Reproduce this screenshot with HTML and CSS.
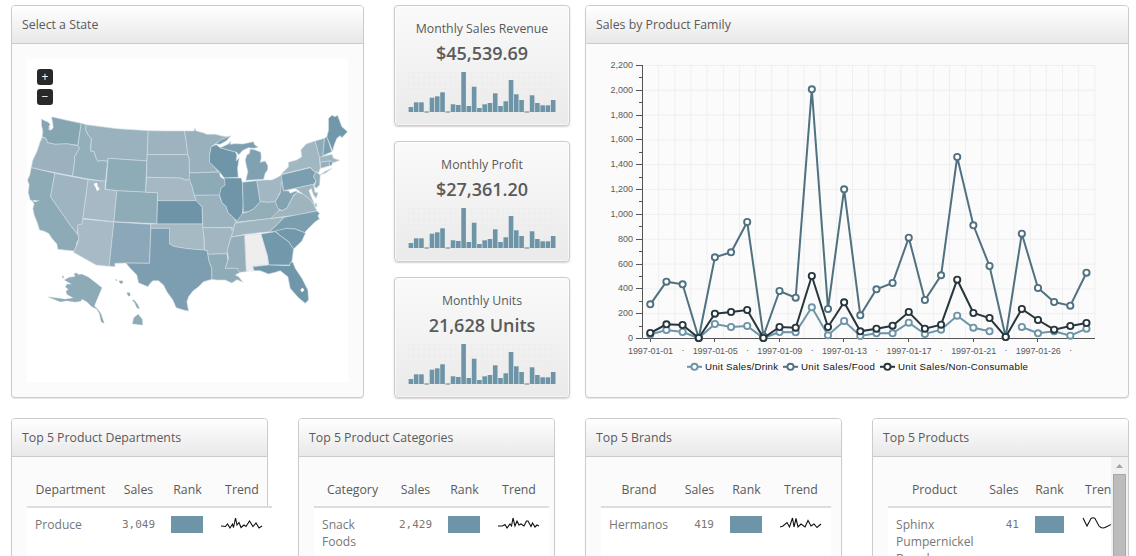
FILE: index.html
```html
<!DOCTYPE html>
<html lang="en">
<head>
<meta charset="utf-8">
<title>Sales Dashboard</title>
<link rel="stylesheet" href="styles.css">
</head>
<body>
<main class="dashboard">
  <div class="row top">
    <section class="panel map-panel">
      <h2 class="panel-head">Select a State</h2>
      <div class="map-body">
        <div class="map">
          <div class="zoom-btns"><span class="zoom-btn">+</span><span class="zoom-btn">−</span></div>
          <svg class="map-svg" viewBox="27 59 321 323" width="321" height="323">
            <g transform="translate(20.2 105) scale(.33333)" class="states">
              <path fill="#85a5b3" d="M64 42L75 48 85 52 90 60 85 66 90 70 84 72 92 76 99 68 97 50 94 38 97 36 140 46 183 55 173 121 140 117 105 118 82 113 77 100 66 95 68 80 64 60Z"/>
              <path fill="#9bb2be" d="M66 97L77 100 82 113 105 118 140 116 173 122 178 130 163 155 164 165 157 213 95 201 33 188 38 165 50 140 60 110Z"/>
              <path fill="#8daab7" d="M33 188L104 205 91 275 150 360 174 390 176 402 170 412 168 425 162 438 113 433 110 417 95 400 85 385 68 377 58 375 52 355 42 330 38 310 42 298 36 287 30 285 24 262 27 240 22 225 29 210Z"/>
              <path fill="#9eb4c0" d="M104 205L204 224 188 340 185 358 175 358 172 375 172 388 150 360 91 275Z"/>
              <path fill="#93afbb" d="M183 55L198 59 196 73 204 90 214 102 212 120 211 138 222 140 226 155 233 169 246 166 262 169 256 229 204 222 157 213 164 165 163 155 178 130 173 122Z"/>
              <path fill="#9ab2be" d="M198 59L290 71 384 77 380 168 264 160 262 169 246 166 233 169 226 155 222 140 211 138 214 102 204 90 196 73Z"/>
              <path fill="#8eabb8" d="M264 160L380 168 376 262 290 257 256 253Z"/>
              <path fill="#a6b9c4" d="M204 224L256 229 254 253 290 257 281 350 188 340Z"/>
              <path fill="#8eabb8" d="M290 257L412 263 410 356 281 350Z"/>
              <path fill="#a8bac5" d="M188 342L281 351 267 484 228 480 160 442 168 425 176 402 172 375 173 358 185 358Z"/>
              <path fill="#8ba7b8" d="M281 351L392 358 388 475 317 474 284 475 284 485 267 483Z"/>
              <path fill="#9db4c0" d="M384 77L440 78 493 78 498 110 503 149 381 149Z"/>
              <path fill="#9ab2be" d="M381 149L502 149 507 160 508 222 500 226 480 219 379 217Z"/>
              <path fill="#a5b8c3" d="M379 217L480 219 500 226 508 222 516 245 522 270 528 287 412 287 412 263 376 262Z"/>
              <path fill="#6d95a7" d="M412 287L530 287 540 300 546 305 547 357 410 357Z"/>
              <path fill="#a6bac4" d="M392 357L547 357 551 390 553 435 520 433 495 430 475 427 460 424 448 417 448 370 392 370Z"/>
              <path fill="#7c9eb0" d="M392 370L448 370 448 417 460 424 475 427 495 430 520 433 553 435 562 438 563 448 567 470 575 490 575 523 550 530 535 545 518 558 505 575 500 590 505 618 490 615 468 608 458 585 440 560 430 540 415 527 398 527 390 535 383 545 355 533 350 510 330 490 317 474 388 475Z"/>
              <path fill="#99b1bd" d="M493 78L522 78 523 69 528 78 548 83 560 88 585 88 605 93 625 96 605 103 573 125 568 150 568 170 595 201 508 204 507 160 503 149 498 110Z"/>
              <path fill="#8daab8" d="M508 204L598 201 600 215 615 225 616 240 602 250 600 265 597 271 522 271 516 245 507 222Z"/>
              <path fill="#9ab2be" d="M523 271L597 270 605 292 618 305 623 322 640 338 648 350 642 362 640 372 633 374 636 367 548 368 546 305 538 298 528 287Z"/>
              <path fill="#6f96a8" d="M573 125L588 119 600 128 620 134 645 140 650 150 648 168 657 158 652 190 654 217 612 219 598 201 568 172 568 150Z"/>
              <path fill="#7c9fb0" d="M600 128L625 117 632 108 630 118 645 116 668 117 700 110 703 119 714 127 700 130 685 128 668 136 655 150 650 142 620 134ZM586 117L600 105 632 92 618 108 600 118Z"/>
              <path fill="#7fa1b1" d="M677 226L683 200 678 180 675 165 680 150 688 145 690 132 705 135 722 142 723 160 720 172 735 168 743 182 742 195 735 205 730 223Z"/>
              <path fill="#6f96a8" d="M612 219L663 219 667 235 669 300 667 322 663 340 650 348 640 338 623 322 618 305 605 292 598 270 602 250 615 240 613 225Z"/>
              <path fill="#7a9eae" d="M667 232L710 227 720 290 712 300 700 312 685 320 669 322 669 300Z"/>
              <path fill="#a2b7c2" d="M710 227L735 225 755 225 770 218 785 209 788 240 780 262 765 290 745 292 720 290Z"/>
              <path fill="#93adb9" d="M667 325L685 320 700 312 712 300 720 290 745 292 765 290 773 308 778 315 755 340 645 352 655 342Z"/>
              <path fill="#9fb5c0" d="M645 354L755 340 792 336 770 360 748 380 675 388 633 396 640 372Z"/>
              <path fill="#83a3b3" d="M783 230L790 258 805 257 810 265 828 258 832 262 820 270 810 290 800 310 785 317 773 310 765 290 780 265Z"/>
              <path fill="#7b9fb0" d="M783 209L870 188 880 198 887 200 880 215 888 228 880 238 825 250 790 257Z"/>
              <path fill="#9eb5c0" d="M832 262L850 268 870 283 882 300 890 318 830 330 752 340 778 315 785 317 800 310 810 290 820 272ZM882 302L888 293 891 305Z"/>
              <path fill="#7b9eaf" d="M792 337L890 318 898 325 893 333 898 342 885 350 875 360 860 375 853 383 825 372 800 370 765 380 748 380 770 360Z"/>
              <path fill="#7299ab" d="M765 378L800 370 825 372 856 384 845 408 820 432 805 410 780 392Z"/>
              <path fill="#7299ab" d="M722 387L765 380 780 392 805 410 820 432 817 455 815 470 808 480 745 480 742 455Z"/>
              <path fill="#eee" d="M673 390L722 387 742 455 745 477 698 482 702 495 695 500 688 490 685 500 678 498Z"/>
              <path fill="#96aebb" d="M633 396L673 390 678 500 655 502 652 490 615 490 625 460 620 435 625 420Z"/>
              <path fill="#a1b6c1" d="M548 368L636 368 633 375 640 372 633 396 625 420 620 446 563 448 562 437 553 435 552 400Z"/>
              <path fill="#8eabb8" d="M563 448L620 446 623 465 615 490 652 490 658 503 645 510 655 515 668 531 650 524 635 534 615 525 590 525 575 523 575 490 567 470Z"/>
              <path fill="#6f97a9" d="M698 485L745 480 808 482 810 472 818 472 825 490 845 520 863 555 865 585 855 595 835 578 810 550 803 515 780 497 765 502 745 507 720 497 702 497Z"/>
              <path fill="#a1b7c1" d="M783 208L805 185 805 172 830 165 845 155 842 135 858 117 885 108 898 155 900 190 895 203 880 197 870 187ZM899 210L915 199 935 190 918 203Z"/>
              <path fill="#8eabb8" d="M885 108L913 100 908 155 898 157Z"/>
              <path fill="#7c9fb0" d="M913 100L920 95 935 140 908 152Z"/>
              <path fill="#7098aa" d="M920 95L925 75 925 40 935 31 945 35 952 31 965 65 982 80 965 98 960 92 950 100 942 120 937 137Z"/>
              <path fill="#9fb6c0" d="M898 157L935 148 940 160 958 166 940 173 928 168 900 172Z"/>
              <path fill="#95afbb" d="M900 172L928 168 928 182 902 190Z"/>
              <path fill="#7299ab" d="M928 168L937 170 935 180 928 182Z"/>
              <path fill="#93adb9" d="M887 200L900 210 898 240 888 250 882 243 888 228 880 215Z"/>
              <path fill="#9eb4bf" d="M825 250L880 238 884 262 893 263 888 280 880 270 873 250 866 257 875 280 885 302 868 282 850 268Z"/>
              <path class="isle" fill="#8daab7" d="M162 506L170 504 174 509 185 508 205 517 245 548 222 603 232 612 242 626 252 655 243 650 238 626 230 612 215 605 200 590 185 582 182 588 165 591 140 587 120 590 85 576 135 583 160 579 140 568 138 558 145 553 136 546 140 538 155 538 133 525 148 517 162 529 149 517 165 515ZM296 528L306 527 309 533 301 536ZM320 563L329 563 330 572 324 573ZM336 585L342 586 352 598 358 611 350 608 344 594ZM354 628L366 643 367 660 337 656 341 638ZM126 512L131 516 128 520ZM285 523L290 525 288 527Z"/>
            </g>
            <g transform="translate(20 105) scale(.33333)" fill="#fff">
              <path d="M221 236L231 233 233 244 239 252 231 259 228 250ZM842 553L848 548 853 555 848 561 842 559ZM38 286L60 287 43 291Z"/>
            </g>
          </svg>
        </div>
      </div>
    </section>

    <div class="kpis">
      <section class="kpi"><h3 class="kpi-title">Monthly Sales Revenue</h3><p class="kpi-value">$45,539.69</p><svg class="bars" width="148" height="42"></svg></section>
      <section class="kpi"><h3 class="kpi-title">Monthly Profit</h3><p class="kpi-value">$27,361.20</p><svg class="bars" width="148" height="42"></svg></section>
      <section class="kpi"><h3 class="kpi-title">Monthly Units</h3><p class="kpi-value">21,628 Units</p><svg class="bars" width="148" height="42"></svg></section>
    </div>

    <section class="panel chart-panel">
      <h2 class="panel-head">Sales by Product Family</h2>
      <svg id="line-chart" class="line-chart" width="542" height="353" viewBox="586 44 542 353"></svg>
    </section>
  </div>

  <div class="row tables">
    <section class="panel table-panel">
      <h2 class="panel-head">Top 5 Product Departments</h2>
      <div class="table-body">
        <div class="grid departments">
          <div class="th">Department</div><div class="th">Sales</div><div class="th">Rank</div><div class="th">Trend</div>
          <div class="td">Produce</div><div class="td num">3,049</div><div class="td"><span class="rank"></span></div>
          <div class="td trend"><svg class="spark" width="43" height="17"><path d="M0 10L4.5 10.500 6.500 8 9 12 11.500 8 12.500 11.500 14.500 2 16 9 18 6.500 20 11.500 23 9 25 10.500 28.500 5 32 10.500 35 7 38 12 41 10"/></svg></div>
        </div>
      </div>
    </section>
    <section class="panel table-panel">
      <h2 class="panel-head">Top 5 Product Categories</h2>
      <div class="table-body">
        <div class="grid categories">
          <div class="th">Category</div><div class="th">Sales</div><div class="th">Rank</div><div class="th">Trend</div>
          <div class="td">Snack Foods</div><div class="td num">2,429</div><div class="td"><span class="rank"></span></div>
          <div class="td trend"><svg class="spark" width="43" height="17"><path d="M0 10L4.500 10 7 8.500 9 12 12 8 13.500 10 15 2 17 10 19 5 21 9 23 8 26 10 28.500 5 30 5 33 10.500 34.500 7 37 11 39 9 41 10"/></svg></div>
        </div>
      </div>
    </section>
    <section class="panel table-panel">
      <h2 class="panel-head">Top 5 Brands</h2>
      <div class="table-body">
        <div class="grid brands">
          <div class="th">Brand</div><div class="th">Sales</div><div class="th">Rank</div><div class="th">Trend</div>
          <div class="td">Hermanos</div><div class="td num">419</div><div class="td"><span class="rank"></span></div>
          <div class="td trend"><svg class="spark" width="43" height="17"><path d="M0 11L3 10 7 6.500 9.500 11 12.500 2 14 11 16 2.500 18 11 21 8 25 11 28 4.500 31 10 34 8 37 11.500 41 8"/></svg></div>
        </div>
      </div>
    </section>
    <section class="panel table-panel scrolls">
      <h2 class="panel-head">Top 5 Products</h2>
      <div class="table-body">
        <div class="grid products">
          <div class="th">Product</div><div class="th">Sales</div><div class="th">Rank</div><div class="th">Trend</div>
          <div class="td">Sphinx Pumpernickel Bread</div><div class="td num">41</div><div class="td"><span class="rank short"></span></div>
          <div class="td trend"><svg class="spark" width="43" height="17"><path d="M2 2L6 10 10 2.500Q12 1 14 2.500L18 10Q21 13.500 25 11L31 8 41 6"/></svg></div>
        </div>
      </div>
      <div class="scrollbar"><svg class="arrow" width="17" height="17"><path d="M5 11L8.500 7 12 11Z" fill="#a3a3a3"/></svg><div class="thumb"></div></div>
    </section>
  </div>
</main>
<script src="charts.js"></script>
</body>
</html>
```
FILE: styles.css
```css
* { box-sizing: border-box; }
body { margin: 0; background: #fff; color: #5a5a5a; font-family: "Open Sans", "Liberation Sans", sans-serif; font-size: 12px; }
h2, h3, p { margin: 0; }
svg { display: block; }
.dashboard { height: 556px; overflow: hidden; padding: 5px 7px 0 11px; }
.row { display: flex; }
.top { height: 393px; margin-bottom: 20px; }
.tables { gap: 30px; }
.panel { border: 1px solid #ccc; border-radius: 4px; background: #fbfbfb; box-shadow: 0 1px 1px rgba(0,0,0,.1); }
.panel-head { height: 38px; padding: 0 10px; line-height: 37px; font-size: 12.3px; font-weight: 500; border-bottom: 1px solid #ccc; border-radius: 3px 3px 0 0; background: linear-gradient(#fff, #e8e8e8); white-space: nowrap; }
.map-panel { width: 353px; margin-right: 30px; }
.map-body { padding: 15px; }
.map { position: relative; width: 321px; height: 323px; background: #fff; }
.zoom-btns { position: absolute; left: 10px; top: 10px; display: flex; flex-direction: column; gap: 4px; }
.zoom-btn { width: 16px; height: 16px; border-radius: 3px; background: #292929; color: #fff; font: 12px/15px "Open Sans", sans-serif; text-align: center; }
.states path { stroke: #d0dce2; stroke-width: 1.8; stroke-linejoin: round; }
.states .isle { stroke: #9db6c1; stroke-width: 1; }

.kpis { display: flex; flex-direction: column; gap: 15px; width: 176px; margin-right: 15px; }
.kpi { flex: none; height: 121px; padding: 14px 13px 0; border: 1px solid #ccc; border-radius: 4px; background: linear-gradient(#fafafa, #eaeaea); box-shadow: 0 1px 2px rgba(0,0,0,.18), inset 0 0 0 1px rgba(255,255,255,.6); text-align: center; }
.kpi-title { font-size: 12.3px; line-height: 18px; font-weight: 500; white-space: nowrap; }
.kpi-value { font-size: 18px; line-height: 24px; font-weight: 600; margin: 3px 0 7px; }

.chart-panel { width: 544px; }
.line-chart text { font-family: "Liberation Sans", Arial, sans-serif; font-size: 9px; fill: #5a5a5a; }
.line-chart .legend { fill: #111; font-size: 9.7px; }

.table-panel { flex: none; width: 257px; height: 300px; position: relative; }
.table-body { padding: 15px; }
.grid { display: grid; }
.departments { width: 245px; grid-template-columns: 87px 49px 49px 60px; }
.categories { width: 235px; grid-template-columns: 77px 49px 49px 60px; }
.brands { width: 230px; grid-template-columns: 76px 45px 49px 60px; }
.products { width: 244px; grid-template-columns: 93px 46px 45px 60px; }
.scrolls .table-body { overflow: hidden; width: 238px; }
.th { height: 36px; padding-top: 9px; line-height: 17px; font-size: 12.3px; font-weight: 500; text-align: center; border-bottom: 2px solid #ddd; }
.td { height: 240px; padding: 8px; background: #fff; line-height: 17px; font-size: 12.1px; color: #777; }
.num { font: 11px/17px "DejaVu Sans Mono", monospace; text-align: right; }
.rank { display: block; width: 32px; height: 17px; background: #6d95a7; }
.rank.short { width: 29px; }
.trend { padding-left: 9px; padding-right: 0; }
.spark path { fill: none; stroke: #111; stroke-width: 1.1; }
.scrollbar { position: absolute; right: 0; top: 38px; width: 17px; height: 260px; background: #f1f1f1; }
.thumb { width: 13px; height: 230px; margin: 0 auto; background: #bcbcbc; border: 1px solid #a8a8a8; }
```
FILE: charts.js
```js
const NS = 'http://www.w3.org/2000/svg';
function add(parent, tag, attrs, text) {
  const el = document.createElementNS(NS, tag);
  for (const k in attrs) el.setAttribute(k, attrs[k]);
  if (text) el.textContent = text;
  parent.appendChild(el);
  return el;
}

// Daily bar heights shared by the three summary cards
const bars = [5, 9.7, 9.7, 0, 14.3, 15.7, 19.7, 0, 7.7, 7, 40, 6, 25.3, 4, 7.7, 9, 18.7, 6, 10.7, 32, 17.7, 12, 0, 16.7, 9, 6.7, 6.7, 12];
document.querySelectorAll('.bars').forEach(svg => {
  let grid = '';
  for (let i = 0; i <= 28; i++) grid += `M${(0.3 + i * 5.27).toFixed(2)} 0V40`;
  for (let i = 0; i <= 7; i++) grid += `M0 ${0.5 + i * 5.6}H148`;
  add(svg, 'path', { d: grid, stroke: '#ececec', 'stroke-opacity': 0.7, fill: 'none' });
  bars.forEach((h, i) => {
    const x = 0.6 + i * 5.27;
    if (h) add(svg, 'rect', { x, y: 40 - h, width: 4.6, height: h, fill: '#6d95a7' });
    else add(svg, 'rect', { x, y: 39.2, width: 4.6, height: 1.6, fill: '#8eabb9' });
  });
});

const chart = document.getElementById('line-chart');
const STEP = 16.155, LEFT = 642.5, BASE = 338.5, ROW = 24.82;
let grid = '';
for (let i = 1; i <= 28; i++) grid += `M${LEFT + i * STEP} 65V338`;
for (let i = 1; i <= 11; i++) grid += `M642 ${BASE - i * ROW}H1095`;
add(chart, 'path', { d: grid, stroke: '#efefef', fill: 'none' });

let axis = 'M642.5 65V338.5H1095';
for (let i = 0; i <= 11; i++) {
  const y = Math.round(BASE - i * ROW - 0.5) + 0.5;
  axis += `M636 ${y}H642`;
  if (i < 11) axis += `M639 ${Math.round(BASE - (i + .5) * ROW - 0.5) + 0.5}H642`;
  add(chart, 'text', { x: 633, y: y + 2.5, 'text-anchor': 'end' }, (i * 200).toLocaleString('en-US'));
}
['01', '05', '09', '13', '17', '21', '26'].forEach((d, i) => {
  const x = LEFT + STEP * (i * 4 + .5);
  axis += `M${Math.round(x) - .5} 338V342`;
  add(chart, 'text', { x, y: 354, 'text-anchor': 'middle', textLength: 45 }, '1997-01-' + d);
  add(chart, 'text', { x: x + STEP * 2, y: 353, 'text-anchor': 'middle' }, '·');
});
add(chart, 'path', { d: axis, stroke: '#555', fill: 'none' });

const series = [
  ['Unit Sales/Drink', '#6d95a7', [334.5,330,332,338,324,327,326,338,332,332.3,307.3,335.3,321,336,333.3,333.3,322.7,334,329.7,315.7,327.7,331.3,null,327,333.3,331.3,335.7,328.7], 687, 705, 73],
  ['Unit Sales/Food', '#507180', [304.3,281.7,284.3,338,257.3,252.3,222,336,291,297.7,89.3,309,189.3,315.3,289.3,283,237.7,300,275.3,157,225.3,266,337,233.7,288,302,305.7,272.7], 783, 801, 74],
  ['Unit Sales/Non-Consumable', '#27363d', [333,324.3,325,338,313.7,312,310,338,327,327.7,276,327,302.3,331.3,328.7,325.7,312,328.7,324.7,279.7,313,318,337,309,320,329.7,326,323], 880, 898, 130]
];
for (const [name, color, ys, lx, tx, len] of series) {
  let d = '', pen = 'M';
  ys.forEach((y, i) => {
    if (y === null) { pen = 'M'; return; }
    d += pen + (LEFT - 0.3 + (i + .5) * STEP).toFixed(1) + ' ' + y;
    pen = 'L';
  });
  add(chart, 'path', { d, stroke: color, 'stroke-width': 2, fill: 'none' });
  ys.forEach((y, i) => {
    if (y !== null) add(chart, 'circle', { cx: LEFT - 0.3 + (i + .5) * STEP, cy: y, r: 3.1, fill: '#fff', stroke: color, 'stroke-width': 1.9 });
  });
  add(chart, 'path', { d: `M${lx} 366.8h15`, stroke: color, 'stroke-width': 2 });
  add(chart, 'circle', { cx: lx + 7.5, cy: 366.8, r: 3.1, fill: '#fff', stroke: color, 'stroke-width': 1.9 });
  add(chart, 'text', { x: tx, y: 370, class: 'legend', textLength: len }, name);
}
```
